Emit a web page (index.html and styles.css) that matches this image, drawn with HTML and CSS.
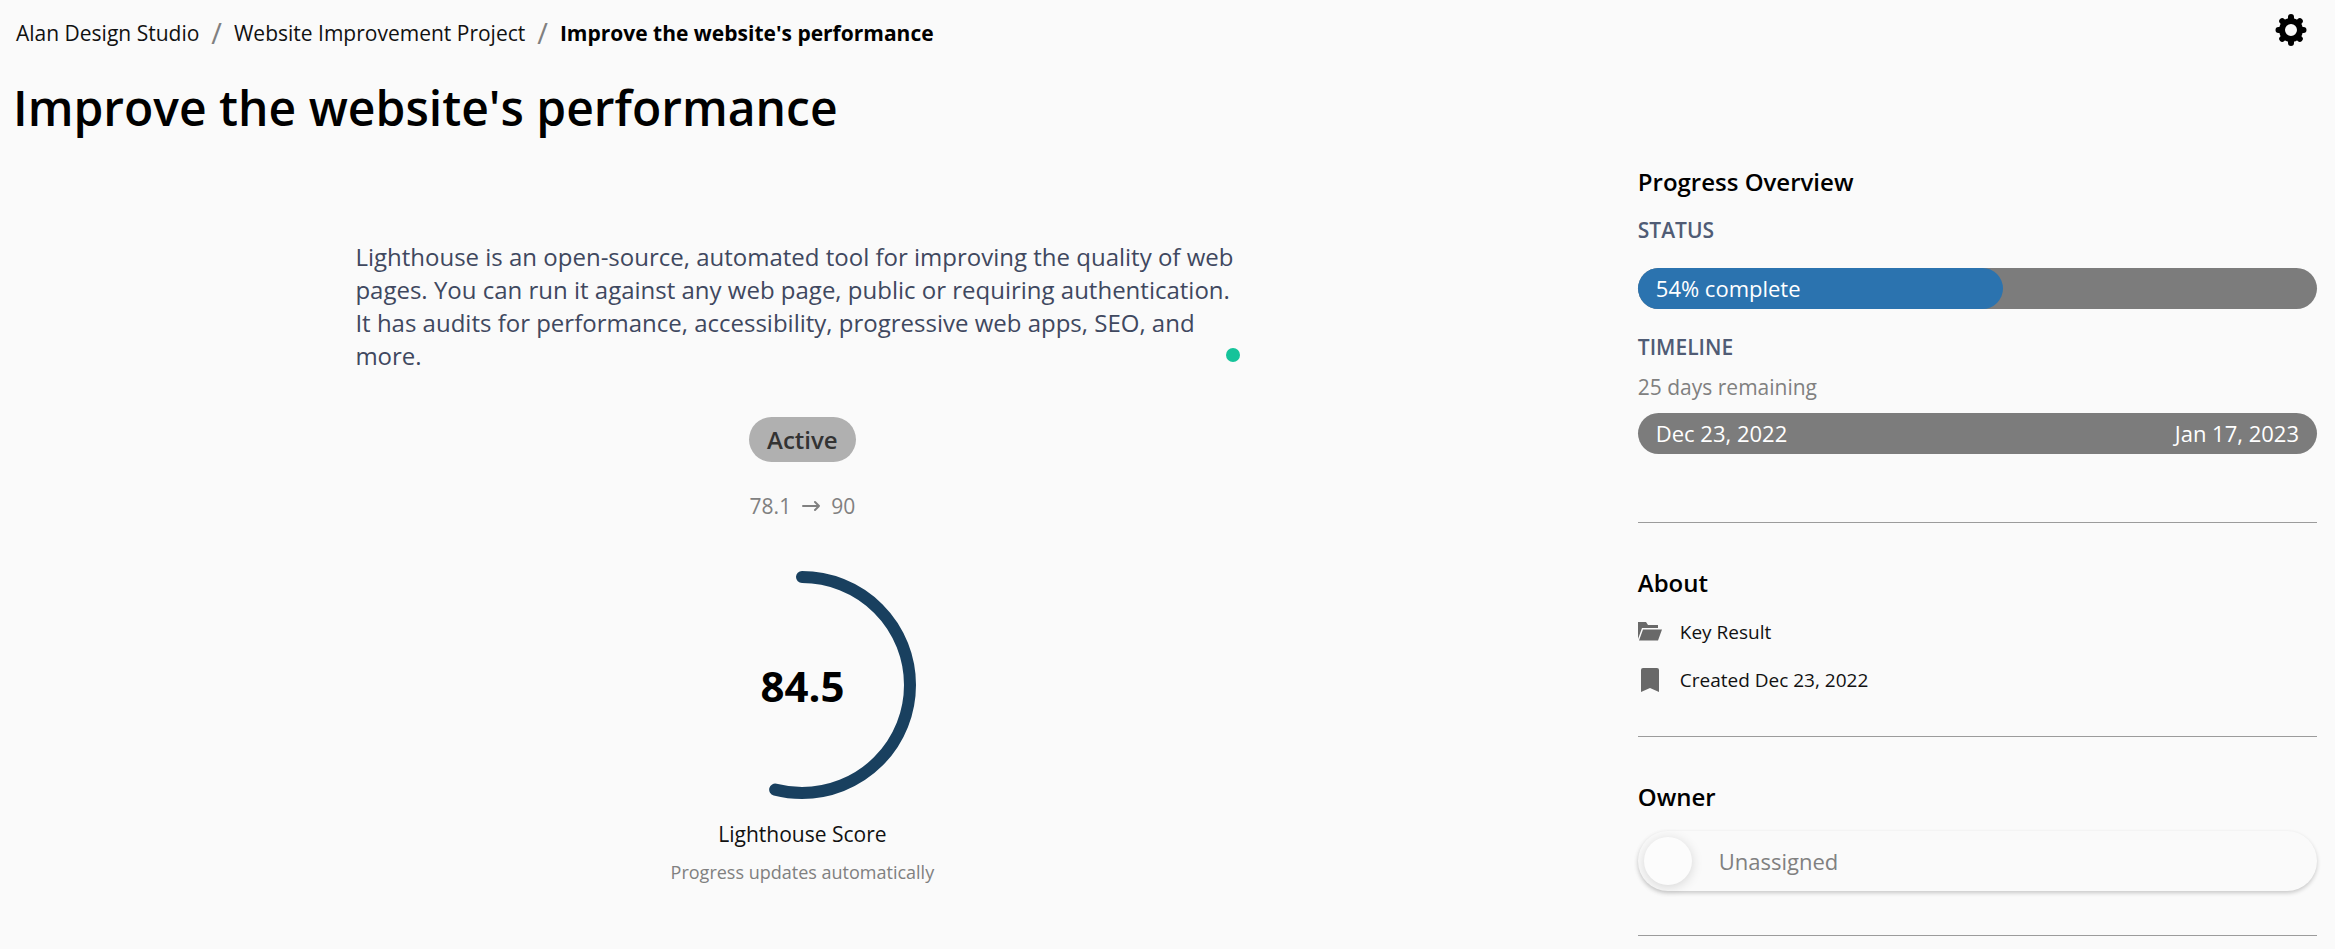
FILE: index.html
```html
<!DOCTYPE html>
<html lang="en">
<head>
<meta charset="utf-8">
<title>Improve the website's performance</title>
<link rel="stylesheet" href="styles.css">
</head>
<body>
<div class="page">
  <header class="topbar">
    <nav class="breadcrumb" aria-label="Breadcrumb">
      <a href="#">Alan Design Studio</a>
      <span class="sep">/</span>
      <a href="#">Website Improvement Project</a>
      <span class="sep">/</span>
      <a href="#" class="current" aria-current="page">Improve the website's performance</a>
    </nav>
    <button class="settings" type="button" aria-label="Settings">
      <svg viewBox="-16 -16 32 32" width="32" height="32" aria-hidden="true">
        <g fill="none" stroke="#000">
          <circle r="9" stroke-width="6"/>
          <path stroke-width="6" stroke-linecap="round" d="M0-10V-13M0 10V13M-10 0H-12.500M10 0H12.500M-7-7L-8.800-8.800M7 7L8.800 8.800M7-7L8.800-8.800M-7 7L-8.800 8.800"/>
        </g>
      </svg>
    </button>
  </header>
  <h1 class="title">Improve the website's performance</h1>
  <div class="columns">
    <main class="main">
      <div class="description">
        <p>Lighthouse is an open-source, automated tool for improving the quality of web pages. You can run it against any web page, public or requiring authentication. It has audits for performance, accessibility, progressive web apps, SEO, and more.</p>
        <span class="dot"></span>
      </div>
      <button class="state" type="button">Active</button>
      <div class="range">
        <span>78.1</span>
        <svg viewBox="0 0 20 12" width="20" height="12" aria-hidden="true"><path d="M2 6H18M14 2L18 6L14 10" fill="none" stroke="#808080" stroke-width="2" stroke-linecap="round" stroke-linejoin="round"/></svg>
        <span>90</span>
      </div>
      <div class="gauge">
        <svg viewBox="0 0 228 228" width="228" height="228" aria-hidden="true"><circle cx="114" cy="114" r="108" pathLength="100" transform="rotate(-90 114 114)"/></svg>
        <strong>84.5</strong>
      </div>
      <p class="metric">Lighthouse Score</p>
      <p class="note">Progress updates automatically</p>
    </main>
    <aside class="side">
      <section class="panel progress">
        <h2>Progress Overview</h2>
        <h3>Status</h3>
        <div class="bar status-bar"><div class="fill" style="width:53.7%">54% complete</div></div>
        <h3>Timeline</h3>
        <p class="remaining">25 days remaining</p>
        <div class="bar dates"><span>Dec 23, 2022</span><span>Jan 17, 2023</span></div>
      </section>
      <section class="panel about">
        <h2>About</h2>
        <ul>
          <li>
            <svg viewBox="0 0 24 24" width="24" height="24" aria-hidden="true"><path fill="#696969" d="M0 2H8L10 5H20V8H4L0 19ZM5 9.500H24L20 20.500H1Z"/></svg>
            Key Result
          </li>
          <li>
            <svg viewBox="0 0 24 24" width="24" height="24" aria-hidden="true"><path fill="#696969" d="M3 2Q3 0 5 0H19Q21 0 21 2V24L12 20L3 24Z"/></svg>
            Created Dec 23, 2022
          </li>
        </ul>
      </section>
      <section class="panel owner">
        <h2>Owner</h2>
        <button class="assignee" type="button"><span class="avatar"></span>Unassigned</button>
      </section>
    </aside>
  </div>
</div>
</body>
</html>
```
FILE: styles.css
```css
* { box-sizing: border-box; }
body {
  margin: 0;
  background: #fafafa;
  color: #000;
  font-family: "Open Sans", "Noto Sans", sans-serif;
}
h1, h2, h3, p, ul { margin: 0; padding: 0; font-weight: 600; }
button { font: inherit; border: 0; padding: 0; background: none; cursor: pointer; }
svg { display: block; flex: none; }

.page { padding: 0 18px 0 13px; }
.topbar {
  display: flex;
  justify-content: space-between;
  align-items: center;
  height: 60px;
  padding: 0 10px 0 3px;
}
.breadcrumb { display: flex; align-items: center; gap: 12px; font-size: 21px; line-height: 30px; padding-top: 6px; }
.breadcrumb a { color: #111; text-decoration: none; }
.breadcrumb .current { color: #000; font-weight: 700; }
.sep { color: #808080; font-size: 29px; }
.title { font-size: 48px; line-height: 66px; padding-top: 15px; }

.columns {
  display: grid;
  grid-template-columns: minmax(0, 7fr) minmax(0, 3fr);
  gap: 40px;
}
.main {
  display: flex;
  flex-direction: column;
  align-items: center;
  padding: 99px 6px 0 0;
}
.description { position: relative; width: 100%; max-width: 894px; font-size: 24px; line-height: 33px; color: #3f485f; }
.description p { font-weight: 400; }
.dot { position: absolute; right: 9px; bottom: 10px; width: 14px; height: 14px; border-radius: 50%; background: #15c39a; }
.state {
  margin-top: 45px;
  padding: 0 18px;
  border-radius: 23px;
  background: #b0b0b0;
  color: #333;
  font-size: 24px;
  font-weight: 600;
  line-height: 45px;
}
.range { display: flex; align-items: center; gap: 10px; margin-top: 29px; color: #808080; font-size: 21px; line-height: 30px; }
.gauge { display: grid; place-items: center; margin-top: 50px; }
.gauge > * { grid-area: 1 / 1; }
.gauge circle { fill: none; stroke: #19405f; stroke-width: 12; stroke-linecap: round; stroke-dasharray: 54 100; }
.gauge strong { padding-top: 2px; font-size: 42px; font-weight: 700; line-height: 56px; }
.metric { margin-top: 20px; color: #111; font-size: 21px; line-height: 30px; font-weight: 400; }
.note { margin-top: 10px; color: #808080; font-size: 18px; line-height: 26px; font-weight: 400; }

.side { padding-top: 24px; }
.panel { border-bottom: 1px solid #9b9b9b; }
h2 { font-size: 24px; line-height: 33px; }
h3 { color: #505c75; font-size: 21px; line-height: 30px; text-transform: uppercase; }
.bar { height: 41px; border-radius: 21px; background: #7c7c7c; color: #fff; font-size: 22px; line-height: 41px; }
.fill { height: 100%; padding-left: 18px; border-radius: 21px; background: #2b73af; }
.progress { padding-bottom: 68px; }
.progress h3 { margin-top: 17px; }
.status-bar { margin: 23px 0 0; }
.progress .status-bar + h3 { margin-top: 23px; }
.remaining { margin-top: 10px; color: #808080; font-size: 21px; line-height: 30px; font-weight: 400; }
.dates { display: flex; justify-content: space-between; margin-top: 11px; padding: 0 18px; }
.about { padding: 43px 0 42px; }
.about ul { list-style: none; display: grid; gap: 20px; margin-top: 19px; }
.about li { display: flex; align-items: center; gap: 18px; font-size: 19px; line-height: 28px; font-weight: 400; color: #111; }
.owner { padding: 43px 0 44px; }
.assignee {
  display: flex;
  align-items: center;
  gap: 27px;
  width: 100%;
  height: 60px;
  margin-top: 18px;
  padding-left: 6px;
  border-radius: 30px;
  box-shadow: 0 2px 4px rgba(0, 0, 0, .2);
  color: #808080;
  font-size: 22px;
}
.avatar { width: 48px; height: 48px; border-radius: 50%; background: #fcfcfc; box-shadow: 0 2px 12px rgba(0, 0, 0, .15); }
```
